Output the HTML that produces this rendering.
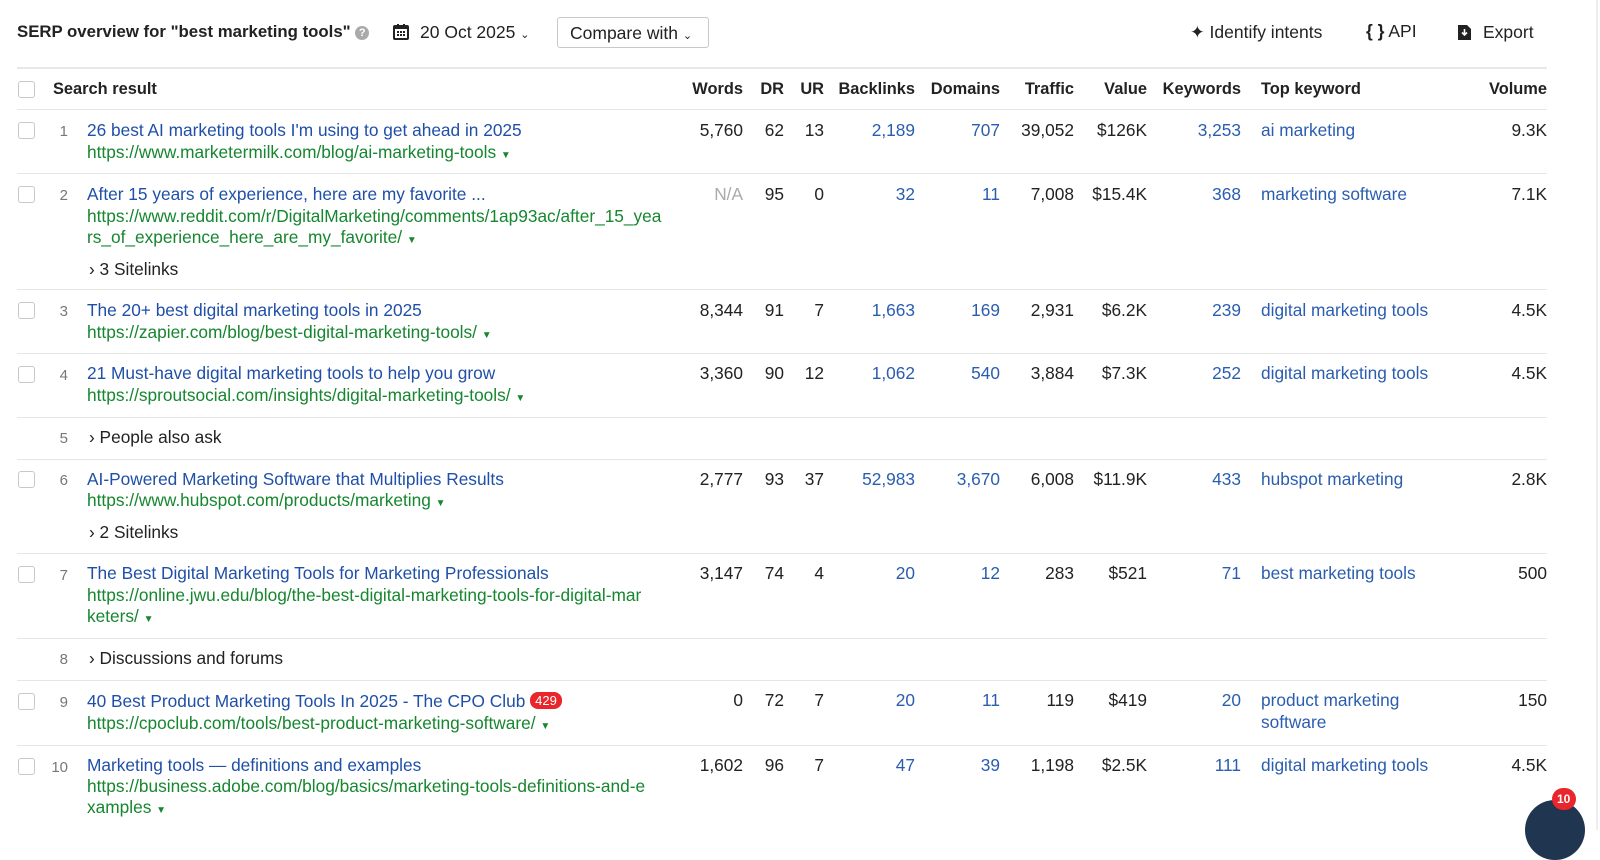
<!DOCTYPE html>
<html><head><meta charset="utf-8"><style>
*{margin:0;padding:0;box-sizing:border-box}
body{width:1600px;height:830px;overflow:hidden;background:#fff;font-family:"Liberation Sans",Arial,sans-serif;font-size:17.3px;color:#222;position:relative}
.a{position:absolute;white-space:nowrap}
.r{text-align:right}
.hl{position:absolute;left:17px;width:1530px;height:1px;background:#e6e6e6}
.cb{position:absolute;left:18px;width:17px;height:17px;border:1px solid #c8c8c8;border-radius:3px;background:#fff}
.n{position:absolute;width:30px;text-align:right;color:#777;font-size:15px}
.t{color:#1f4fa8}
.u{color:#16862f}
.b{color:#2a5db0}
.tri{font-size:10px;color:#16862f}
.hd{font-weight:bold;color:#222;font-size:16.4px}
</style></head><body>
<div class="a hd" style="left:17px;top:22px;font-size:16.8px">SERP overview for "best marketing tools" <span style="display:inline-block;width:14px;height:14px;border-radius:50%;background:#aaa;color:#fff;font-size:11px;text-align:center;line-height:14px;vertical-align:1px">?</span></div>
<svg class="a" style="left:393px;top:24px" width="16" height="16" viewBox="0 0 16 16"><rect x="1" y="2" width="14" height="13" rx="1" fill="none" stroke="#222" stroke-width="2"/><rect x="1" y="2" width="14" height="3" fill="#222"/><rect x="4" y="0" width="2" height="4" fill="#222"/><rect x="10" y="0" width="2" height="4" fill="#222"/><g fill="#222"><rect x="4" y="7" width="2" height="2"/><rect x="7" y="7" width="2" height="2"/><rect x="10" y="7" width="2" height="2"/><rect x="4" y="10" width="2" height="2"/><rect x="7" y="10" width="2" height="2"/><rect x="10" y="10" width="2" height="2"/></g></svg>
<div class="a" style="left:420px;top:22px;font-size:17.5px">20 Oct 2025 <span style="font-size:11px">&#8964;</span></div>
<div class="a" style="left:557px;top:17px;width:152px;height:31px;border:1px solid #c8c8c8;border-radius:3px;padding:5px 12px;font-size:17.5px">Compare with <span style="font-size:11px">&#8964;</span></div>
<div class="a" style="left:1190px;top:22px;font-size:17.5px">&#10022; Identify intents</div>
<div class="a" style="left:1366px;top:21px;font-size:17.5px"><b>{ }</b> API</div>
<svg class="a" style="left:1457px;top:24px" width="15" height="17" viewBox="0 0 15 17"><path d="M1 1h9l4 4v11H1z" fill="#222"/><path d="M7.5 5v6M5 8.5l2.5 2.5 2.5-2.5" stroke="#fff" stroke-width="1.6" fill="none"/></svg>
<div class="a" style="left:1483px;top:22px;font-size:17.5px">Export</div>
<div class="a" style="left:1596px;top:0;width:2px;height:830px;background:#eee"></div>

<div class="hl" style="top:67px;height:2px;background:#e8e8e8"></div>
<div class="cb" style="top:81px"></div>
<div class="a hd" style="left:53px;top:80px">Search result</div>
<div class="a hd r" style="right:857px;top:80px">Words</div>
<div class="a hd r" style="right:816px;top:80px">DR</div>
<div class="a hd r" style="right:776px;top:80px">UR</div>
<div class="a hd r" style="right:685px;top:80px">Backlinks</div>
<div class="a hd r" style="right:600px;top:80px">Domains</div>
<div class="a hd r" style="right:526px;top:80px">Traffic</div>
<div class="a hd r" style="right:453px;top:80px">Value</div>
<div class="a hd r" style="right:359px;top:80px">Keywords</div>
<div class="a hd" style="left:1261px;top:80px">Top keyword</div>
<div class="a hd r" style="right:53px;top:80px">Volume</div>
<div class="hl" style="top:109px"></div>

<!-- row 1 -->
<div class="cb" style="top:122px"></div><div class="n" style="left:38px;top:123px">1</div>
<div class="a t" style="left:87px;top:120px">26 best AI marketing tools I'm using to get ahead in 2025</div>
<div class="a u" style="left:87px;top:142px">https://www.marketermilk.com/blog/ai-marketing-tools <span class="tri">&#9660;</span></div>
<div class="a r" style="right:857px;top:120px">5,760</div><div class="a r" style="right:816px;top:120px">62</div><div class="a r" style="right:776px;top:120px">13</div>
<div class="a r b" style="right:685px;top:120px">2,189</div><div class="a r b" style="right:600px;top:120px">707</div><div class="a r" style="right:526px;top:120px">39,052</div><div class="a r" style="right:453px;top:120px">$126K</div><div class="a r b" style="right:359px;top:120px">3,253</div>
<div class="a b" style="left:1261px;top:120px">ai marketing</div><div class="a r" style="right:53px;top:120px">9.3K</div>
<div class="hl" style="top:173px"></div>

<!-- row 2 -->
<div class="cb" style="top:186px"></div><div class="n" style="left:38px;top:187px">2</div>
<div class="a t" style="left:87px;top:184px">After 15 years of experience, here are my favorite ...</div>
<div class="a u" style="left:87px;top:206px">https://www.reddit.com/r/DigitalMarketing/comments/1ap93ac/after_15_yea</div>
<div class="a u" style="left:87px;top:227px">rs_of_experience_here_are_my_favorite/ <span class="tri">&#9660;</span></div>
<div class="a" style="left:89px;top:259px">&#8250; 3 Sitelinks</div>
<div class="a r" style="right:857px;top:184px;color:#aaa">N/A</div><div class="a r" style="right:816px;top:184px">95</div><div class="a r" style="right:776px;top:184px">0</div>
<div class="a r b" style="right:685px;top:184px">32</div><div class="a r b" style="right:600px;top:184px">11</div><div class="a r" style="right:526px;top:184px">7,008</div><div class="a r" style="right:453px;top:184px">$15.4K</div><div class="a r b" style="right:359px;top:184px">368</div>
<div class="a b" style="left:1261px;top:184px">marketing software</div><div class="a r" style="right:53px;top:184px">7.1K</div>
<div class="hl" style="top:289px"></div>

<!-- row 3 -->
<div class="cb" style="top:302px"></div><div class="n" style="left:38px;top:303px">3</div>
<div class="a t" style="left:87px;top:300px">The 20+ best digital marketing tools in 2025</div>
<div class="a u" style="left:87px;top:322px">https://zapier.com/blog/best-digital-marketing-tools/ <span class="tri">&#9660;</span></div>
<div class="a r" style="right:857px;top:300px">8,344</div><div class="a r" style="right:816px;top:300px">91</div><div class="a r" style="right:776px;top:300px">7</div>
<div class="a r b" style="right:685px;top:300px">1,663</div><div class="a r b" style="right:600px;top:300px">169</div><div class="a r" style="right:526px;top:300px">2,931</div><div class="a r" style="right:453px;top:300px">$6.2K</div><div class="a r b" style="right:359px;top:300px">239</div>
<div class="a b" style="left:1261px;top:300px">digital marketing tools</div><div class="a r" style="right:53px;top:300px">4.5K</div>
<div class="hl" style="top:353px"></div>

<!-- row 4 -->
<div class="cb" style="top:366px"></div><div class="n" style="left:38px;top:367px">4</div>
<div class="a t" style="left:87px;top:363px">21 Must-have digital marketing tools to help you grow</div>
<div class="a u" style="left:87px;top:385px">https://sproutsocial.com/insights/digital-marketing-tools/ <span class="tri">&#9660;</span></div>
<div class="a r" style="right:857px;top:363px">3,360</div><div class="a r" style="right:816px;top:363px">90</div><div class="a r" style="right:776px;top:363px">12</div>
<div class="a r b" style="right:685px;top:363px">1,062</div><div class="a r b" style="right:600px;top:363px">540</div><div class="a r" style="right:526px;top:363px">3,884</div><div class="a r" style="right:453px;top:363px">$7.3K</div><div class="a r b" style="right:359px;top:363px">252</div>
<div class="a b" style="left:1261px;top:363px">digital marketing tools</div><div class="a r" style="right:53px;top:363px">4.5K</div>
<div class="hl" style="top:417px"></div>

<!-- row 5 -->
<div class="n" style="left:38px;top:430px">5</div>
<div class="a" style="left:89px;top:427px">&#8250; People also ask</div>
<div class="hl" style="top:459px"></div>

<!-- row 6 -->
<div class="cb" style="top:471px"></div><div class="n" style="left:38px;top:472px">6</div>
<div class="a t" style="left:87px;top:469px">AI-Powered Marketing Software that Multiplies Results</div>
<div class="a u" style="left:87px;top:490px">https://www.hubspot.com/products/marketing <span class="tri">&#9660;</span></div>
<div class="a" style="left:89px;top:522px">&#8250; 2 Sitelinks</div>
<div class="a r" style="right:857px;top:469px">2,777</div><div class="a r" style="right:816px;top:469px">93</div><div class="a r" style="right:776px;top:469px">37</div>
<div class="a r b" style="right:685px;top:469px">52,983</div><div class="a r b" style="right:600px;top:469px">3,670</div><div class="a r" style="right:526px;top:469px">6,008</div><div class="a r" style="right:453px;top:469px">$11.9K</div><div class="a r b" style="right:359px;top:469px">433</div>
<div class="a b" style="left:1261px;top:469px">hubspot marketing</div><div class="a r" style="right:53px;top:469px">2.8K</div>
<div class="hl" style="top:553px"></div>

<!-- row 7 -->
<div class="cb" style="top:566px"></div><div class="n" style="left:38px;top:567px">7</div>
<div class="a t" style="left:87px;top:563px">The Best Digital Marketing Tools for Marketing Professionals</div>
<div class="a u" style="left:87px;top:585px">https://online.jwu.edu/blog/the-best-digital-marketing-tools-for-digital-mar</div>
<div class="a u" style="left:87px;top:606px">keters/ <span class="tri">&#9660;</span></div>
<div class="a r" style="right:857px;top:563px">3,147</div><div class="a r" style="right:816px;top:563px">74</div><div class="a r" style="right:776px;top:563px">4</div>
<div class="a r b" style="right:685px;top:563px">20</div><div class="a r b" style="right:600px;top:563px">12</div><div class="a r" style="right:526px;top:563px">283</div><div class="a r" style="right:453px;top:563px">$521</div><div class="a r b" style="right:359px;top:563px">71</div>
<div class="a b" style="left:1261px;top:563px">best marketing tools</div><div class="a r" style="right:53px;top:563px">500</div>
<div class="hl" style="top:638px"></div>

<!-- row 8 -->
<div class="n" style="left:38px;top:651px">8</div>
<div class="a" style="left:89px;top:648px">&#8250; Discussions and forums</div>
<div class="hl" style="top:680px"></div>

<!-- row 9 -->
<div class="cb" style="top:693px"></div><div class="n" style="left:38px;top:694px">9</div>
<div class="a t" style="left:87px;top:691px">40 Best Product Marketing Tools In 2025 - The CPO Club <span style="display:inline-block;background:#e8262b;color:#fff;font-size:13px;border-radius:8px;padding:1px 5px;vertical-align:2px">429</span></div>
<div class="a u" style="left:87px;top:713px">https://cpoclub.com/tools/best-product-marketing-software/ <span class="tri">&#9660;</span></div>
<div class="a r" style="right:857px;top:690px">0</div><div class="a r" style="right:816px;top:690px">72</div><div class="a r" style="right:776px;top:690px">7</div>
<div class="a r b" style="right:685px;top:690px">20</div><div class="a r b" style="right:600px;top:690px">11</div><div class="a r" style="right:526px;top:690px">119</div><div class="a r" style="right:453px;top:690px">$419</div><div class="a r b" style="right:359px;top:690px">20</div>
<div class="a b" style="left:1261px;top:690px">product marketing</div><div class="a b" style="left:1261px;top:712px">software</div><div class="a r" style="right:53px;top:690px">150</div>
<div class="hl" style="top:745px"></div>

<!-- row 10 -->
<div class="cb" style="top:758px"></div><div class="n" style="left:38px;top:759px">10</div>
<div class="a t" style="left:87px;top:755px">Marketing tools — definitions and examples</div>
<div class="a u" style="left:87px;top:776px">https://business.adobe.com/blog/basics/marketing-tools-definitions-and-e</div>
<div class="a u" style="left:87px;top:797px">xamples <span class="tri">&#9660;</span></div>
<div class="a r" style="right:857px;top:755px">1,602</div><div class="a r" style="right:816px;top:755px">96</div><div class="a r" style="right:776px;top:755px">7</div>
<div class="a r b" style="right:685px;top:755px">47</div><div class="a r b" style="right:600px;top:755px">39</div><div class="a r" style="right:526px;top:755px">1,198</div><div class="a r" style="right:453px;top:755px">$2.5K</div><div class="a r b" style="right:359px;top:755px">111</div>
<div class="a b" style="left:1261px;top:755px">digital marketing tools</div><div class="a r" style="right:53px;top:755px">4.5K</div>

<div class="a" style="left:1525px;top:800px;width:60px;height:60px;border-radius:50%;background:#1f3550"></div>
<div class="a" style="left:1552px;top:788px;width:24px;height:22px;border-radius:11px;background:#e8262b;color:#fff;font-size:12px;font-weight:bold;padding:4px 0 0 5px">10</div>
</body></html>
